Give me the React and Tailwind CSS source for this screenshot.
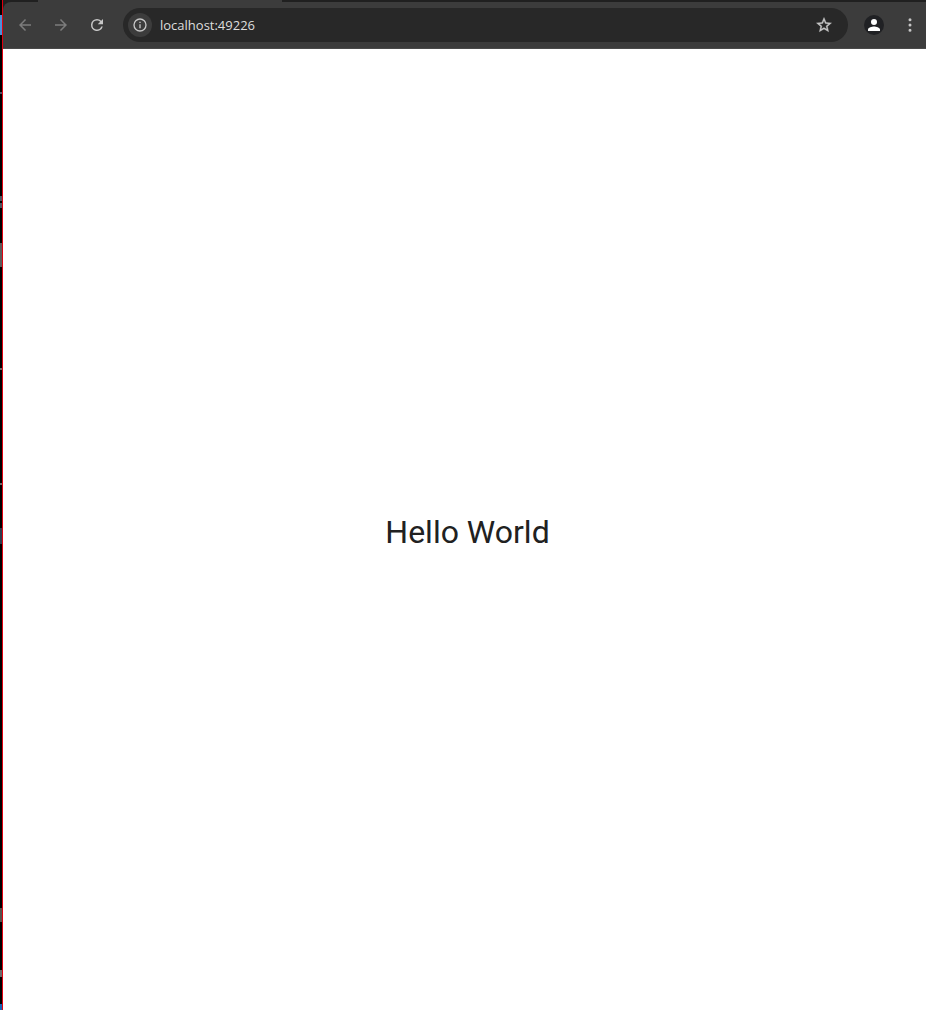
const BACKDROP_MARKS = [
  { top: 15, height: 20, color: '#4a90d9' },
  { top: 92, height: 2, color: '#4b5068' },
  { top: 196, height: 5, color: '#4b5560' },
  { top: 203, height: 5, color: '#4b5560' },
  { top: 243, height: 24, color: '#5c5a5a' },
  { top: 368, height: 2, color: '#6b6b6b' },
  { top: 483, height: 2, color: '#6b6b6b' },
  { top: 528, height: 16, color: '#2e3a4c' },
  { top: 908, height: 14, color: '#55504c' },
  { top: 970, height: 7, color: '#6b6b6b' },
  { top: 1004, height: 6, color: '#1463b8' },
];

function Backdrop() {
  return (
    <div aria-hidden="true" className="relative w-[3px] shrink-0 overflow-hidden border-r border-[#e0000f] bg-black">
      {BACKDROP_MARKS.map((m) => (
        <span
          key={m.top}
          className="absolute right-0 w-[2px]"
          style={{ top: m.top, height: m.height, backgroundColor: m.color }}
        />
      ))}
    </div>
  );
}

function Icon({ d, className = 'size-4', viewBox = '0 0 24 24' }) {
  return (
    <svg viewBox={viewBox} fill="currentColor" aria-hidden="true" className={className}>
      <path d={d} />
    </svg>
  );
}

function TabStrip() {
  return (
    <div className="flex h-[2px] bg-[#202020]">
      <div className="ml-[35px] w-[244px] bg-[#3c3c3c]" />
    </div>
  );
}

function Toolbar() {
  return (
    <div className="bg-[#202020]">
      <div className="flex h-[47px] items-center rounded-tl-lg border-b border-[#4a4a4a] bg-[#3c3c3c] pr-[6px] pl-[12px]">
        <div className="flex gap-4">
          <button type="button" aria-label="Back" disabled className="grid size-5 place-items-center text-[#7c7c7c]">
            <Icon d="M20 11H7.83l5.59-5.59L12 4l-8 8 8 8 1.41-1.41L7.83 13H20v-2z" className="size-[18px]" />
          </button>
          <button type="button" aria-label="Forward" disabled className="grid size-5 place-items-center text-[#7c7c7c]">
            <Icon d="M12 4l-1.41 1.41L16.17 11H4v2h12.17l-5.58 5.59L12 20l8-8z" className="size-[18px]" />
          </button>
          <button type="button" aria-label="Reload" className="grid size-5 place-items-center text-[#c7c7c7]">
            <Icon
              d="M17.65 6.35A7.96 7.96 0 0 0 12 4a8 8 0 1 0 7.73 10h-2.08A6 6 0 1 1 12 6c1.66 0 3.14.69 4.22 1.78L13 11h7V4l-2.35 2.35z"
              className="size-[18px]"
            />
          </button>
        </div>
        <div className="ml-4 flex h-[34px] flex-1 items-center rounded-full bg-[#282828] pr-[15px] pl-[5px]">
          <button type="button" aria-label="View site information" className="grid size-6 place-items-center rounded-full bg-[#3c3c3c] text-[#c7c7c7]">
            <Icon
              d="M11 7h2v2h-2zm0 4h2v6h-2zm1-9a10 10 0 1 0 0 20 10 10 0 0 0 0-20zm0 18a8 8 0 1 1 0-16 8 8 0 0 1 0 16z"
              className="size-4"
            />
          </button>
          <input
            type="text"
            aria-label="Address"
            defaultValue="localhost:49226"
            spellCheck={false}
            className="ml-2 h-6 min-w-0 flex-1 bg-transparent font-['Open_Sans',sans-serif] text-[13px] leading-6 text-[#dedede] outline-none"
          />
          <button type="button" aria-label="Bookmark this tab" className="grid size-[18px] place-items-center text-[#c7c7c7]">
            <Icon
              d="M22 9.24l-7.19-.62L12 2 9.19 8.63 2 9.24l5.46 4.73L5.82 21 12 17.27 18.18 21l-1.63-7.03L22 9.24zM12 15.4l-3.76 2.27 1-4.28-3.32-2.88 4.38-.38L12 6.1l1.71 4.04 4.38.38-3.32 2.88 1 4.28L12 15.4z"
              className="size-[18px] stroke-current stroke-[0.5]"
            />
          </button>
        </div>
        <button type="button" aria-label="Profile" className="ml-4 grid size-5 place-items-center rounded-full bg-[#202124] text-white">
          <Icon
            d="M12 12a4 4 0 1 0 0-8 4 4 0 0 0 0 8zm0 2c-2.67 0-8 1.34-8 4v2h16v-2c0-2.66-5.33-4-8-4z"
            className="size-[18px]"
          />
        </button>
        <button type="button" aria-label="Menu" className="ml-4 grid size-5 place-items-center text-[#c7c7c7]">
          <Icon
            d="M12 7a2 2 0 1 0 0-4 2 2 0 0 0 0 4zm0 3a2 2 0 1 0 0 4 2 2 0 0 0 0-4zm0 7a2 2 0 1 0 0 4 2 2 0 0 0 0-4z"
            className="size-[18px]"
          />
        </button>
      </div>
    </div>
  );
}

export default function App() {
  return (
    <div className="flex min-h-screen bg-white">
      <Backdrop />
      <div className="flex min-w-0 flex-1 flex-col">
        <TabStrip />
        <Toolbar />
        <main className="flex flex-1 items-center justify-center pt-1 pl-[6px]">
          <h1 className="font-[Roboto,sans-serif] text-[32px] leading-10 text-[#212121]">Hello World</h1>
        </main>
      </div>
    </div>
  );
}
